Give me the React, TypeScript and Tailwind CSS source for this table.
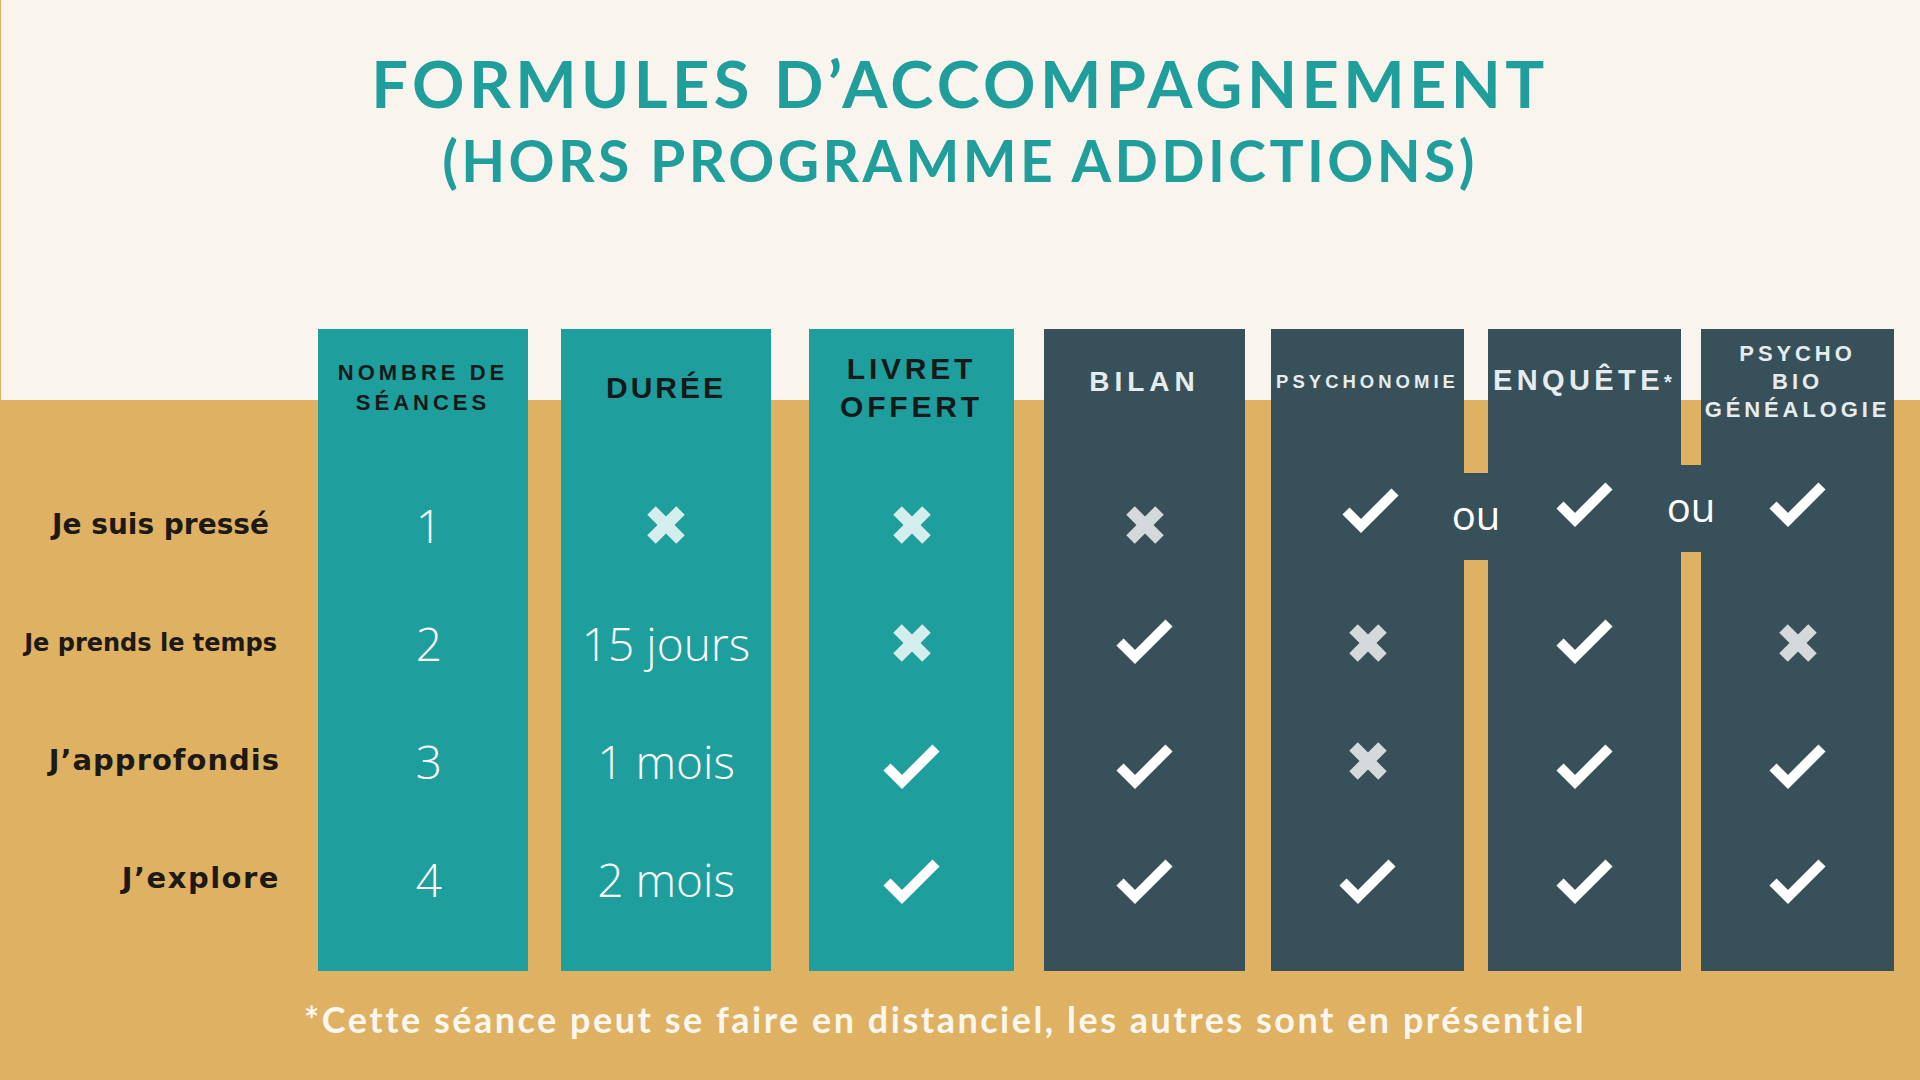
import type { ReactNode } from 'react'

type Mark = 'check' | 'cross'
type CellValue = Mark | string

type CellSpec = { value: CellValue; className?: string }

function Check({ className = '' }: { className?: string }) {
  return (
    <svg viewBox="0 0 58 48" className={`w-[58px] h-[48px] ${className}`}>
      <polyline
        points="4,23 19,38 53,4"
        fill="none"
        stroke="#ffffff"
        strokeWidth="10"
        strokeLinecap="butt"
        strokeLinejoin="miter"
      />
    </svg>
  )
}

function Cross({ color, className = '' }: { color: string; className?: string }) {
  return (
    <svg viewBox="0 0 40 40" className={`w-[40px] h-[40px] ${className}`}>
      <line x1="5.5" y1="5.5" x2="34.5" y2="34.5" stroke={color} strokeWidth="12" />
      <line x1="34.5" y1="5.5" x2="5.5" y2="34.5" stroke={color} strokeWidth="12" />
    </svg>
  )
}

function Column({
  className,
  header,
  cells,
  dark,
  cellClass = '',
}: {
  className: string
  header: ReactNode
  cells: CellSpec[]
  dark?: boolean
  cellClass?: string
}) {
  return (
    <div
      className={`flex flex-col shrink-0 pb-[33px] ${
        dark ? 'bg-[#37505a]' : 'bg-[#1f9e9e]'
      } ${className}`}
    >
      <div
        className={`h-[111px] flex items-center justify-center text-center font-['Liberation_Sans',Arial,sans-serif] font-bold ${
          dark ? 'text-[#e6ecee] pb-[6px]' : 'text-[#141a1a] pt-[6px]'
        }`}
      >
        {header}
      </div>
      <div className="mt-[26px] flex flex-col">
        {cells.map((c, i) => (
          <div key={i} className={`h-[118px] flex items-center justify-center ${cellClass}`}>
            {c.value === 'check' ? (
              <Check className={c.className} />
            ) : c.value === 'cross' ? (
              <Cross color={dark ? '#d5d9dc' : '#d3eeec'} className={c.className} />
            ) : (
              <span className="font-['Open_Sans',sans-serif] font-light text-[46px] leading-none text-white">
                {c.value}
              </span>
            )}
          </div>
        ))}
      </div>
    </div>
  )
}

function Bridge({ className, spacer }: { className: string; spacer: string }) {
  return (
    <div className={`flex flex-col shrink-0 ${className}`}>
      <div className={spacer} />
      <div className="relative z-10 h-[87px] bg-[#37505a] flex items-center justify-center">
        <span className="whitespace-nowrap font-['Open_Sans',sans-serif] text-[40px] leading-none text-white pb-[4px]">
          ou
        </span>
      </div>
    </div>
  )
}

const rowFix = ['', '', 'translate-y-[7px]', 'translate-y-[4px]']

function cells(values: CellValue[], first?: string): CellSpec[] {
  return values.map((v, i) => ({
    value: v,
    className: i === 0 && first ? first : v === 'check' ? rowFix[i] : '',
  }))
}

const labels = [
  { text: 'Je suis pressé', cls: 'text-[28px] pr-[49px]' },
  { text: 'Je prends le temps', cls: 'text-[24px] pr-[41px]' },
  { text: 'J’approfondis', cls: 'text-[29px] tracking-[1px] pr-[38px]' },
  { text: 'J’explore', cls: 'text-[29px] tracking-[1.5px] pr-[38px]' },
]

export default function App() {
  return (
    <div className="w-[1920px] h-[1080px] overflow-hidden flex flex-col bg-[linear-gradient(to_right,#dfb162_1px,transparent_1px),linear-gradient(to_bottom,#f9f5ee_400px,#dfb162_400px)]">
      <div className="pt-[51px] flex flex-col items-center text-[#1f9e9c] font-['Lato',sans-serif] font-bold">
        <h1 className="text-[65px] leading-[65px] tracking-[4.4px]">FORMULES D’ACCOMPAGNEMENT</h1>
        <h2 className="mt-[16px] text-[57px] leading-[57px] tracking-[3.4px]">
          (HORS PROGRAMME ADDICTIONS)
        </h2>
      </div>

      <div className="mt-[140px] flex">
        <div className="w-[318px] shrink-0 flex flex-col">
          <div className="h-[137px]" />
          {labels.map((l) => (
            <div
              key={l.text}
              className={`h-[118px] flex items-center justify-end font-['DejaVu_Sans',sans-serif] font-bold text-[#1d1a16] ${l.cls}`}
            >
              {l.text}
            </div>
          ))}
        </div>

        <Column
          className="w-[210px]"
          cellClass="pl-[12px]"
          header={
            <div className="text-[22px] leading-[30px] tracking-[4px]">
              NOMBRE DE
              <br />
              SÉANCES
            </div>
          }
          cells={cells(['1', '2', '3', '4'])}
        />
        <Column
          className="w-[210px] ml-[33px]"
          header={<div className="text-[30px] leading-[38px] tracking-[3px]">DURÉE</div>}
          cells={cells(['cross', '15 jours', '1 mois', '2 mois'])}
        />
        <Column
          className="w-[205px] ml-[38px]"
          header={
            <div className="text-[30px] leading-[38px] tracking-[3.8px]">
              LIVRET
              <br />
              OFFERT
            </div>
          }
          cells={cells(['cross', 'cross', 'check', 'check'])}
        />
        <Column
          className="w-[201px] ml-[30px]"
          dark
          header={<div className="text-[28px] leading-[34px] tracking-[5px]">BILAN</div>}
          cells={cells(['cross', 'check', 'check', 'check'])}
        />

        <div className="ml-[26px] flex">
          <Column
            className="w-[193px]"
            dark
            header={<div className="text-[18.5px] leading-[24px] tracking-[4px]">PSYCHONOMIE</div>}
            cells={cells(['check', 'cross', 'cross', 'check'], '-translate-y-[13px] translate-x-[3px]')}
          />
          <Bridge className="w-[24px]" spacer="h-[144px]" />
          <Column
            className="w-[193px]"
            dark
            header={
              <div className="text-[29px] leading-[34px] tracking-[4.4px] whitespace-nowrap">
                ENQUÊTE<span className="text-[20px] align-middle">*</span>
              </div>
            }
            cells={cells(['check', 'check', 'check', 'check'], '-translate-y-[19px]')}
          />
          <Bridge className="w-[20px]" spacer="h-[136px]" />
          <Column
            className="w-[193px]"
            dark
            header={
              <div className="text-[22px] leading-[28px] tracking-[3.9px]">
                PSYCHO
                <br />
                BIO
                <br />
                GÉNÉALOGIE
              </div>
            }
            cells={cells(['check', 'cross', 'check', 'check'], '-translate-y-[19px]')}
          />
        </div>
      </div>

      <p className="mt-[30px] ml-[304px] font-['Lato',sans-serif] font-bold text-[36px] leading-[36px] tracking-[2.5px] text-[#fbf7ee]">
        *Cette séance peut se faire en distanciel, les autres sont en présentiel
      </p>
    </div>
  )
}
